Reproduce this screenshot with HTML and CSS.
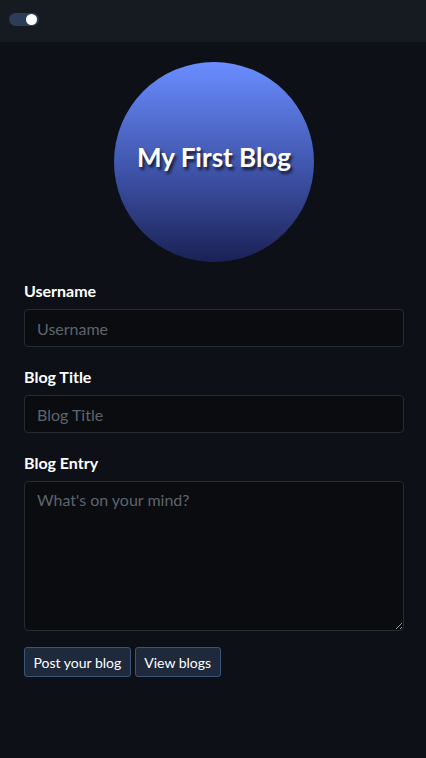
FILE: index.html
```html
<!DOCTYPE html>
<html>
<head>
<meta charset="utf-8">
<link rel="stylesheet" href="styles.css">
</head>
<body>
<header class="topbar">
  <span class="toggle"><span class="knob"></span></span>
</header>
<main class="page">
  <div class="logo"><h1 class="logo-text">My First Blog</h1></div>
  <form class="form">
    <div class="group">
      <label class="label">Username</label>
      <input class="field" type="text" placeholder="Username">
    </div>
    <div class="group">
      <label class="label">Blog Title</label>
      <input class="field" type="text" placeholder="Blog Title">
    </div>
    <div class="group">
      <label class="label">Blog Entry</label>
      <textarea class="field area" placeholder="What's on your mind?"></textarea>
    </div>
    <div class="actions">
      <button class="btn" type="button">Post your blog</button>
      <button class="btn" type="button">View blogs</button>
    </div>
  </form>
</main>
</body>
</html>
```
FILE: styles.css
```css
* { box-sizing: border-box; }
html, body { margin: 0; padding: 0; }
body {
  background: #0d1117;
  color: #fff;
  font-family: Lato, "Open Sans", sans-serif;
  height: 758px;
}
.topbar {
  height: 42px;
  background: #161b22;
  display: flex;
  align-items: center;
  padding-left: 9px;
}
.toggle {
  width: 30px;
  height: 13px;
  border-radius: 7px;
  background: #2b3d58;
  position: relative;
  margin-top: -3px;
}
.knob {
  position: absolute;
  right: 2px;
  top: 1px;
  width: 11px;
  height: 11px;
  border-radius: 50%;
  background: #fff;
}
.page { padding: 20px 22px 0 24px; }
.logo {
  width: 200px;
  height: 200px;
  border-radius: 50%;
  margin: 0 auto;
  background: linear-gradient(to bottom, #6a8dff 0%, #3e53a8 55%, #1b2155 100%);
  display: flex;
  align-items: center;
  justify-content: center;
}
.logo-text {
  margin: 0;
  font-size: 26px;
  font-weight: 700;
  color: #fff;
  text-shadow: 2px 3px 3px rgba(0,0,0,0.7);
  margin-top: -10px;
}
.form { margin-top: 17px; }
.group {
  display: flex;
  flex-direction: column;
  gap: 6px;
  margin-bottom: 18px;
}
.label {
  font-size: 16px;
  font-weight: 700;
  line-height: 24px;
}
.field {
  height: 38px;
  background: #0a0c10;
  border: 1px solid #262b33;
  border-radius: 4px;
  color: #fff;
  font-family: inherit;
  font-size: 16px;
  padding: 0 12px;
  outline: none;
}
.field::placeholder { color: #5d646d; }
.area {
  height: 150px;
  padding: 8px 12px;
  resize: vertical;
}
.group:nth-child(3) { margin-bottom: 16px; }
.actions { display: flex; gap: 4px; }
.btn {
  height: 30px;
  padding: 0 8.5px;
  background: #1e2a3b;
  border: 1px solid #3b5478;
  border-radius: 3px;
  color: #fff;
  font-family: inherit;
  font-size: 14px;
}
```
